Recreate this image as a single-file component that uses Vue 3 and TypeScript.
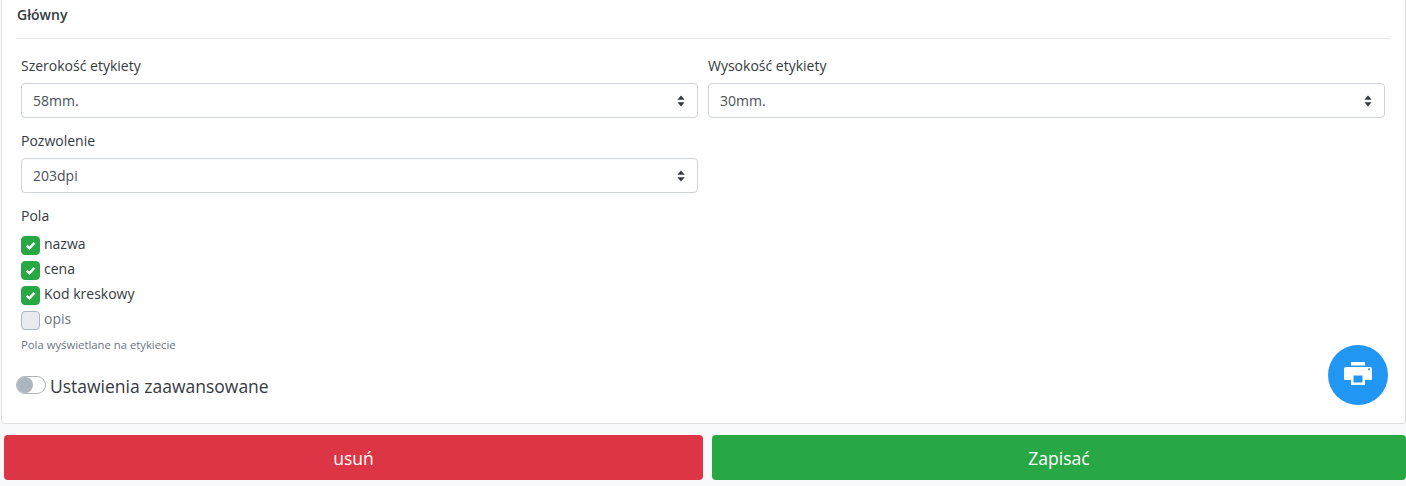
<template>
  <div class="page">
    <div class="card">
      <h6 class="section-title">Główny</h6>
      <hr class="divider" />
      <div class="form-grid">
        <div v-for="field in selects" :key="field.label" class="form-group">
          <label class="field-label">{{ field.label }}</label>
          <div class="select">
            <span>{{ field.value }}</span>
            <svg class="select-arrows" viewBox="0 0 8 12" width="8" height="12">
              <path d="M4 0.5 L7.6 4.8 H0.4 Z M4 11.5 L0.4 7.2 H7.6 Z" fill="#343a40" />
            </svg>
          </div>
        </div>
      </div>
      <div class="fields">
        <div class="field-label">Pola</div>
        <div class="checks">
          <div v-for="item in checks" :key="item.label" class="check-row">
            <span class="check-box" :class="{ checked: item.checked }">
              <svg v-if="item.checked" viewBox="0 0 12 12" width="11" height="11">
                <path d="M1.8 6.2 L4.8 9 L10.2 3.2" fill="none" stroke="#fff" stroke-width="2.6" />
              </svg>
            </span>
            <span class="check-label" :class="{ muted: !item.checked }">{{ item.label }}</span>
          </div>
        </div>
        <small class="hint">Pola wyświetlane na etykiecie</small>
      </div>
      <div class="switch-row">
        <span class="switch"><span class="switch-knob"></span></span>
        <span class="switch-label">Ustawienia zaawansowane</span>
      </div>
      <button class="fab" type="button" aria-label="print">
        <svg class="fab-icon" viewBox="0 0 28 23" width="28" height="23">
          <path
            fill="#fff"
            fill-rule="evenodd"
            d="M7 0 H21 V3.5 H7 Z M2 5 H26 Q28 5 28 7 V17 Q28 18 27 18 H21 V23 H7 V18 H1 Q0 18 0 17 V7 Q0 5 2 5 Z M25 6.2 A1 1 0 1 0 25.01 6.2 Z M9.5 13.5 V20.5 H18.5 V13.5 Z"
          />
        </svg>
      </button>
    </div>
    <div class="actions">
      <button class="btn btn-danger" type="button">usuń</button>
      <button class="btn btn-success" type="button">Zapisać</button>
    </div>
  </div>
</template>

<script setup lang="ts">
interface SelectField {
  label: string;
  value: string;
}

interface CheckItem {
  label: string;
  checked: boolean;
}

const selects: SelectField[] = [
  { label: "Szerokość etykiety", value: "58mm." },
  { label: "Wysokość etykiety", value: "30mm." },
  { label: "Pozwolenie", value: "203dpi" },
];

const checks: CheckItem[] = [
  { label: "nazwa", checked: true },
  { label: "cena", checked: true },
  { label: "Kod kreskowy", checked: true },
  { label: "opis", checked: false },
];
</script>

<style>
html,
body {
  margin: 0;
  background: #f8f9fa;
}
</style>

<style scoped>
.page {
  width: 1406px;
  height: 486px;
  overflow: hidden;
  font-family: "Open Sans", "Noto Sans", sans-serif;
  font-size: 14px;
  color: #343a40;
  background: #f8f9fa;
}

.card {
  position: relative;
  box-sizing: border-box;
  height: 424px;
  margin-left: 1px;
  padding: 0 15px 0 14px;
  background: #fff;
  border: 1px solid #dfdfdf;
  border-top: none;
  border-radius: 0 0 4px 4px;
}

.section-title {
  margin: 0;
  padding: 5px 0 0 1px;
  font-size: 14px;
  font-weight: 600;
  line-height: 20px;
  color: #343a40;
}

.divider {
  margin: 13px 0 0;
  border: none;
  border-top: 1px solid #e4e6e8;
}

.form-grid {
  display: grid;
  grid-template-columns: 677px 677px;
  column-gap: 10px;
  padding: 17px 5px 0;
}

.form-group {
  margin-bottom: 13px;
}

.field-label {
  display: block;
  height: 20px;
  margin-bottom: 7px;
  line-height: 20px;
  color: #343a40;
}

.select {
  box-sizing: border-box;
  display: flex;
  align-items: center;
  justify-content: space-between;
  height: 35px;
  padding: 0 12px 0 11px;
  color: #495057;
  background: #fff;
  border: 1px solid #ced4da;
  border-radius: 4px;
}

.fields {
  padding: 0 5px;
}

.fields .field-label {
  margin-bottom: 6px;
}

.checks {
  display: flex;
  flex-direction: column;
}

.check-row {
  display: flex;
  align-items: center;
  height: 25px;
  gap: 4px;
}

.check-box {
  box-sizing: border-box;
  display: flex;
  align-items: center;
  justify-content: center;
  width: 19px;
  height: 19px;
  margin-top: 1px;
  background: #e9ecef;
  border: 1px solid #adb5bd;
  border-radius: 4px;
}

.check-box.checked {
  background: #28a745;
  border-color: #28a745;
}

.check-label {
  margin-top: -2px;
  line-height: 20px;
}

.check-label.muted {
  color: #6c757d;
}

.hint {
  display: block;
  margin-top: 5px;
  font-size: 11.3px;
  line-height: 16px;
  color: #6c757d;
}

.switch-row {
  display: flex;
  align-items: center;
  gap: 4px;
  margin-top: 19px;
}

.switch {
  box-sizing: border-box;
  position: relative;
  display: block;
  width: 30px;
  height: 18px;
  background: #fff;
  border: 1px solid #adb5bd;
  border-radius: 9px;
}

.switch-knob {
  position: absolute;
  top: 0;
  left: 0;
  width: 16px;
  height: 16px;
  background: #adb5bd;
  border-radius: 50%;
}

.switch-label {
  margin-top: 2px;
  font-size: 17.5px;
  line-height: 24px;
  color: #343a40;
}

.fab {
  position: absolute;
  left: 1326px;
  top: 345px;
  display: flex;
  align-items: center;
  justify-content: center;
  width: 60px;
  height: 60px;
  padding: 0;
  background: #2196f3;
  border: none;
  border-radius: 50%;
}

.fab-icon {
  margin-top: -3px;
}

.actions {
  display: flex;
  gap: 9px;
  padding: 11px 0 0 4px;
}

.btn {
  height: 45px;
  padding: 0;
  font-family: inherit;
  font-size: 17.5px;
  color: #fff;
  border: none;
  border-radius: 4px;
}

.btn-danger {
  width: 699px;
  background: #dc3545;
}

.btn-success {
  width: 694px;
  background: #28a745;
}
</style>
